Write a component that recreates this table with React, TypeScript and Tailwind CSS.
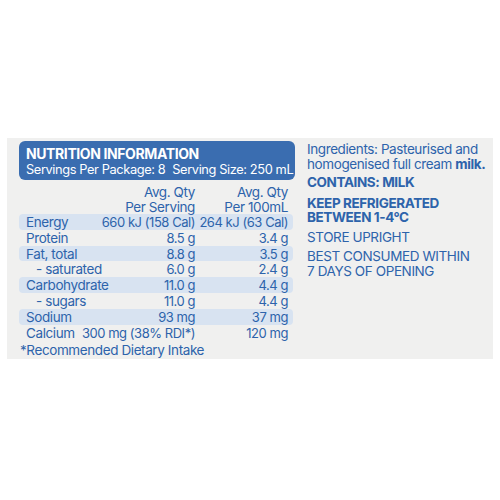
import React from "react";

const rows: { label: string; a: string; b: string; hl?: boolean; indent?: boolean }[] = [
  { label: "Energy", a: "660 kJ (158 Cal)", b: "264 kJ (63 Cal)", hl: true },
  { label: "Protein", a: "8.5 g", b: "3.4 g" },
  { label: "Fat, total", a: "8.8 g", b: "3.5 g", hl: true },
  { label: "- saturated", a: "6.0 g", b: "2.4 g", indent: true },
  { label: "Carbohydrate", a: "11.0 g", b: "4.4 g", hl: true },
  { label: "- sugars", a: "11.0 g", b: "4.4 g", indent: true },
  { label: "Sodium", a: "93 mg", b: "37 mg", hl: true },
  { label: "Calcium", a: "300 mg (38% RDI*)", b: "120 mg" },
];

export default function App() {
  return (
    <div
      className="w-[500px] h-[500px] bg-white pt-[138px] pl-[7px]"
      style={{ fontFamily: "Inter, 'Liberation Sans', sans-serif" }}
    >
      <div className="w-[486px] h-[221px] bg-[#f0f0ef] flex text-[#2d63ab] tracking-[-0.025em]">
        <div className="w-[276px] ml-[12px] pt-[3px]">
          <div className="bg-[#3a6db0] rounded-[6px] h-[39px] px-[7px] pt-[5px] text-white">
            <div className="font-bold text-[14px] leading-[16px]">NUTRITION INFORMATION</div>
            <div className="text-[12.8px] leading-[15px] tracking-[-0.03em] whitespace-nowrap flex gap-[7px]">
              <span>Servings Per Package: 8</span>
              <span>Serving Size: 250 mL</span>
            </div>
          </div>
          <div className="flex text-[13.5px] leading-[15px] mt-[5px] h-[32px]">
            <div className="w-[176px] text-right">Avg. Qty<br />Per Serving</div>
            <div className="w-[93px] text-right">Avg. Qty<br />Per 100mL</div>
          </div>
          <div className="text-[13.5px] leading-[16px] -mt-[3px]">
            {rows.map((r) => (
              <div
                key={r.label}
                className={`flex h-[15.8px] w-[274px] pr-[5px] rounded-[4px] ${r.hl ? "bg-[#d8e3f1]" : ""}`}
              >
                <div className={`flex-1 whitespace-nowrap ${r.indent ? "pl-[17px]" : "pl-[7px]"}`}>{r.label}</div>
                <div className="whitespace-nowrap text-right text-[13px] tracking-[-0.035em]">{r.a}</div>
                <div className="w-[93px] text-right whitespace-nowrap text-[13px] tracking-[-0.035em]">{r.b}</div>
              </div>
            ))}
            <div className="whitespace-nowrap pl-[1px] mt-[2px]">*Recommended Dietary Intake</div>
          </div>
        </div>
        <div className="ml-[12px] pt-[4px] text-[13.5px] leading-[14.5px]">
          <p>Ingredients: Pasteurised and<br />homogenised full cream <b>milk.</b></p>
          <p className="font-bold mt-[4px]">CONTAINS: MILK</p>
          <p className="font-bold mt-[6px]">KEEP REFRIGERATED<br />BETWEEN 1-4°C</p>
          <p className="mt-[5px]">STORE UPRIGHT</p>
          <p className="mt-[5px]">BEST CONSUMED WITHIN<br />7 DAYS OF OPENING</p>
        </div>
      </div>
    </div>
  );
}
